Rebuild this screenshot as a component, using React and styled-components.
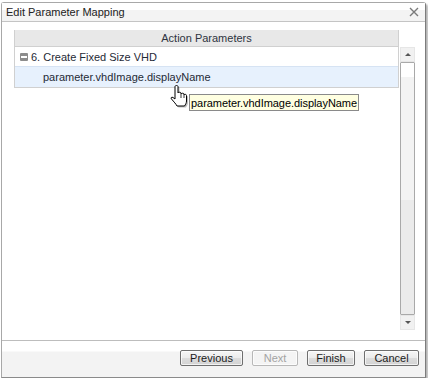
import React from "react";
import styled, { createGlobalStyle } from "styled-components";

const GlobalStyle = createGlobalStyle`
  html, body {
    margin: 0;
    padding: 0;
    background: #ffffff;
  }
  body {
    font-family: "Liberation Sans", Arial, sans-serif;
    font-size: 11px;
    color: #1f2a36;
  }
  #root {
    padding: 2px 0 0 1px;
  }
`;

const Window = styled.div`
  position: relative;
  box-sizing: border-box;
  width: 425px;
  height: 376px;
  border: 1px solid #a8a8a8;
  border-right-color: #7c7c7c;
  border-bottom-color: #8a8a8a;
  border-radius: 3px 3px 0 0;
  box-shadow: 2px 2px 2px rgba(0, 0, 0, 0.3);
  display: flex;
  flex-direction: column;
  background: #ffffff;
  & > * {
    flex-shrink: 0;
  }
`;

const TitleBar = styled.div`
  height: 19px;
  box-sizing: border-box;
  border-bottom: 1px solid #c4c4c4;
  background: linear-gradient(#ffffff 0 7px, #f3f3f3 7px);
  display: flex;
  align-items: center;
  justify-content: space-between;
  padding: 0 6px 0 4px;
  font-size: 11px;
  color: #222;
`;

const Close = styled.span`
  display: flex;
  align-items: center;
`;

const Content = styled.div`
  height: 318px;
  padding: 8px 0 0 12px;
  box-sizing: border-box;
  display: flex;
  gap: 1px;
`;

const Grid = styled.div`
  width: 385px;
  align-self: flex-start;
  border: 1px solid #d0d0d0;
  border-top: none;
  box-sizing: border-box;
`;

const Header = styled.div`
  height: 16px;
  background: #e8e8e8;
  border-bottom: 1px solid #d0d0d0;
  display: flex;
  align-items: center;
  justify-content: center;
  color: #2e3440;
`;

const Row = styled.div`
  height: ${(p) => (p.$selected ? 20 : 19)}px;
  display: flex;
  align-items: center;
  padding-left: ${(p) => p.$indent}px;
  background: ${(p) => (p.$selected ? "#e7f1fd" : "#ffffff")};
  border-top: ${(p) => (p.$selected ? "1px solid #d6e3f3" : "none")};
  gap: 3px;
`;

const Collapse = styled.span`
  width: 8px;
  height: 8px;
  border-radius: 1px;
  background: #8c8c8c;
  display: inline-flex;
  align-items: center;
  justify-content: center;
  &::after {
    content: "";
    width: 6px;
    height: 2px;
    background: #fff;
  }
`;

const ScrollBar = styled.div`
  margin-top: 17px;
  width: 15px;
  height: 283px;
  display: flex;
  flex-direction: column;
`;

const ScrollButton = styled.div`
  height: 15px;
  flex-shrink: 0;
  background: #f1f1f1;
  border: 1px solid #e6e6e6;
  box-sizing: border-box;
  display: flex;
  align-items: center;
  justify-content: center;
  &::after {
    content: "";
    border-left: 3px solid transparent;
    border-right: 3px solid transparent;
    ${(p) =>
      p.$down
        ? "border-top: 3px solid #555;"
        : "border-bottom: 3px solid #555;"}
  }
`;

const Track = styled.div`
  flex: 1;
  border: 1px solid #a9a9a9;
  border-radius: 1px;
  background: linear-gradient(#ffffff 0 14px, #f3f3f3 14px 137px, #ebebeb 137px);
`;

const Footer = styled.div`
  height: 37px;
  box-sizing: border-box;
  border-top: 1px solid #bdbdbd;
  background: linear-gradient(#ffffff 0 10px, #f3f3f3 11px);
  display: flex;
  justify-content: flex-end;
  align-items: flex-start;
  padding: 9px 6px 0 0;
  gap: 9px;
`;

const Button = styled.button`
  width: ${(p) => p.$w}px;
  height: 16px;
  box-sizing: border-box;
  padding: 0;
  font-family: "Liberation Sans", Arial, sans-serif;
  font-size: 11px;
  border-radius: 2px;
  border: 1px solid ${(p) => (p.disabled ? "#b8b8b8" : "#6f6f6f")};
  color: ${(p) => (p.disabled ? "#a3a3a3" : "#1b1b1b")};
  background: ${(p) =>
    p.disabled
      ? "#f4f4f4"
      : "linear-gradient(#f6f6f6 0%, #ebebeb 50%, #dcdcdc 51%, #d3d3d3 100%)"};
  box-shadow: inset 0 0 0 1px rgba(255, 255, 255, 0.7);
`;

const Tooltip = styled.div`
  position: absolute;
  left: 187px;
  top: 91px;
  width: 170px;
  height: 17px;
  box-sizing: border-box;
  background: #ffffe1;
  border: 1px solid #8a8a8a;
  padding-left: 1px;
  display: flex;
  align-items: center;
  color: #000;
  white-space: nowrap;
  letter-spacing: -0.05px;
`;

const Cursor = styled.svg`
  position: absolute;
  left: 166px;
  top: 81px;
`;

const HAND =
  "M7,2.5 C7,1.2 10,1.2 10,2.5 L10,9 C10,8 13,8 13,9 L13,10 C13,9 16,9 16,10 L16,11 C16,10 18.5,10 18.5,11.5 L18.5,17 C18.5,19 17.5,20.5 16.5,22 L9,22 C8,20 6,18 3.5,15 C2.5,14 3.5,12.5 5,13.5 L7,15 Z";

function HandCursor() {
  return (
    <Cursor width="22" height="24" viewBox="0 0 22 24">
      <path d={HAND} fill="rgba(0,0,0,0.25)" transform="translate(1.5,1.5)" />
      <path
        d={HAND}
        fill="#fff"
        stroke="#000"
        strokeWidth="1"
        strokeLinejoin="round"
      />
      <path d="M13,10 L13,14 M16,11 L16,14" stroke="#000" strokeWidth="0.8" />
    </Cursor>
  );
}

export default function App() {
  return (
    <>
      <GlobalStyle />
      <Window>
        <TitleBar>
          <span>Edit Parameter Mapping</span>
          <Close>
            <svg width="10" height="10" viewBox="0 0 10 10">
              <path d="M1,1 L9,9 M9,1 L1,9" stroke="#7a7a7a" strokeWidth="1.4" />
            </svg>
          </Close>
        </TitleBar>
        <Content>
          <Grid>
            <Header>Action Parameters</Header>
            <Row $indent={5}>
              <Collapse />
              <span>6. Create Fixed Size VHD</span>
            </Row>
            <Row $indent={28} $selected>
              parameter.vhdImage.displayName
            </Row>
          </Grid>
          <ScrollBar>
            <ScrollButton />
            <Track />
            <ScrollButton $down />
          </ScrollBar>
        </Content>
        <Footer>
          <Button $w={63}>Previous</Button>
          <Button $w={46} disabled>
            Next
          </Button>
          <Button $w={48}>Finish</Button>
          <Button $w={55}>Cancel</Button>
        </Footer>
        <Tooltip>parameter.vhdImage.displayName</Tooltip>
        <HandCursor />
      </Window>
    </>
  );
}
